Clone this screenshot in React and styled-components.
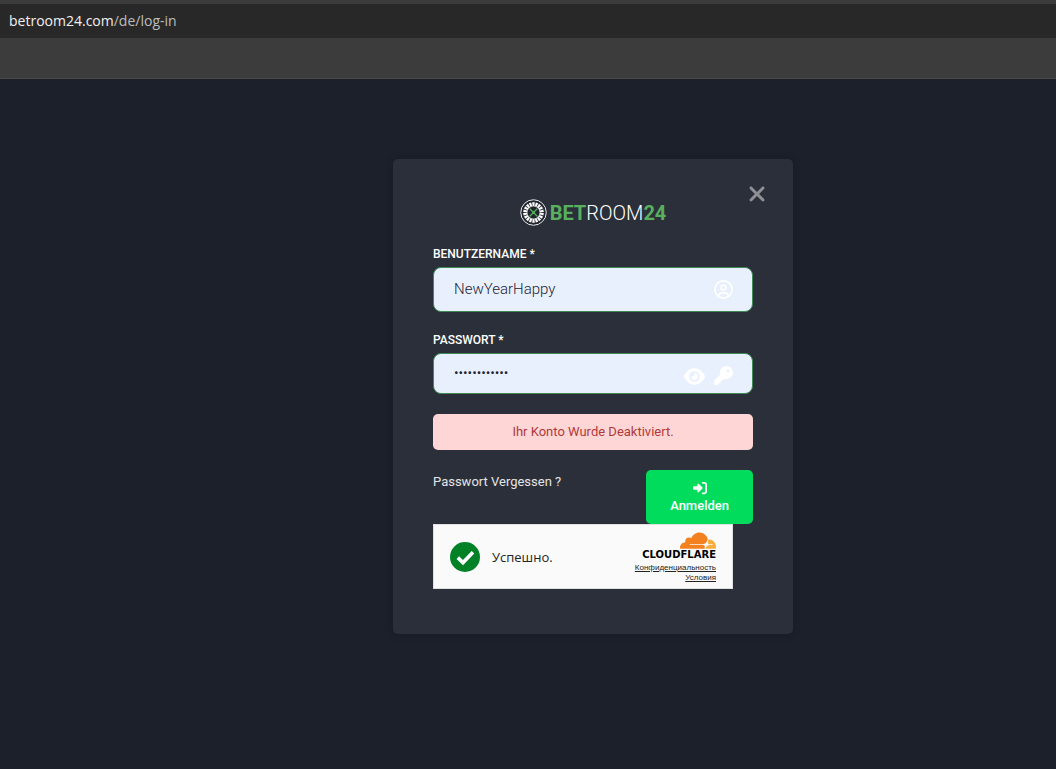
import { useState } from "react";
import styled, { createGlobalStyle } from "styled-components";
import {
  FaEye,
  FaKey,
  FaRegCircleUser,
  FaRightToBracket,
  FaXmark,
} from "react-icons/fa6";

const pockets = Array.from({ length: 18 }, (_, index) => index * 20);

export default function App() {
  const [username, setUsername] = useState("NewYearHappy");
  const [password, setPassword] = useState("happyyear123");
  const [showPassword, setShowPassword] = useState(false);

  return (
    <>
      <GlobalStyle />
      <BrowserBar>
        <AddressBar>
          <AddressHost>betroom24.com</AddressHost>/de/log-in
        </AddressBar>
      </BrowserBar>
      <Page>
        <LoginCard onSubmit={(event) => event.preventDefault()}>
          <CloseButton type="button" aria-label="Schließen">
            <FaXmark size={24} />
          </CloseButton>

          <Brand>
            <RouletteWheel />
            <BrandName>
              <BrandAccent>BET</BrandAccent>ROOM<BrandAccent>24</BrandAccent>
            </BrandName>
          </Brand>

          <Field>
            <Label htmlFor="username">BENUTZERNAME *</Label>
            <InputBox>
              <Input
                id="username"
                type="text"
                value={username}
                onChange={(event) => setUsername(event.target.value)}
              />
              <FieldIcon>
                <FaRegCircleUser size={19} />
              </FieldIcon>
            </InputBox>
          </Field>

          <Field>
            <Label htmlFor="password">PASSWORT *</Label>
            <InputBox $compact>
              <Input
                id="password"
                type={showPassword ? "text" : "password"}
                value={password}
                onChange={(event) => setPassword(event.target.value)}
              />
              <EyeButton
                type="button"
                aria-label="Passwort anzeigen"
                onClick={() => setShowPassword(!showPassword)}
              >
                <FaEye size={21} />
              </EyeButton>
              <FieldIcon>
                <FaKey size={19} />
              </FieldIcon>
            </InputBox>
          </Field>

          <Alert role="alert">Ihr Konto Wurde Deaktiviert.</Alert>

          <Actions>
            <ForgotLink href="#">Passwort Vergessen ?</ForgotLink>
            <SubmitButton type="submit">
              <FaRightToBracket size={14} />
              Anmelden
            </SubmitButton>
          </Actions>

          <Captcha>
            <CheckIcon />
            <CaptchaText>Успешно.</CaptchaText>
            <CaptchaBrand>
              <CloudIcon />
              <CaptchaName>CLOUDFLARE</CaptchaName>
              <CaptchaLink href="#">Конфиденциальность</CaptchaLink>
              <CaptchaLink href="#">Условия</CaptchaLink>
            </CaptchaBrand>
          </Captcha>
        </LoginCard>
      </Page>
    </>
  );
}

function RouletteWheel() {
  return (
    <svg width="27" height="27" viewBox="0 0 54 54" aria-hidden="true">
      <circle cx="27" cy="27" r="25.5" fill="#22262f" stroke="#e8eaec" strokeWidth="2" />
      {pockets.map((angle) => (
        <path
          key={angle}
          d="M24.4 6.5h5.2l-1 8.5h-3.2z"
          fill="#fff"
          transform={`rotate(${angle} 27 27)`}
        />
      ))}
      <circle cx="27" cy="27" r="13" fill="#20252d" stroke="#e8eaec" strokeWidth="1.5" />
      <path
        d="M20 20l14 14M34 20L20 34"
        stroke="#58b05f"
        strokeWidth="2.4"
        strokeLinecap="round"
      />
      <circle cx="27" cy="27" r="2.5" fill="#58b05f" />
    </svg>
  );
}

function CheckIcon() {
  return (
    <svg width="30" height="30" viewBox="0 0 30 30" aria-hidden="true">
      <circle cx="15" cy="15" r="15" fill="#038127" />
      <path d="M7.8 15.6l5.2 5L23 10.3" fill="none" stroke="#fff" strokeWidth="3.6" />
    </svg>
  );
}

function CloudIcon() {
  return (
    <svg width="36" height="17" viewBox="0 6.3 24 11.3" aria-hidden="true">
      <path
        fill="#f4811f"
        d="M16.5088 16.8447c.1475-.5068.0908-.9707-.1553-1.3154-.2246-.3164-.6045-.499-1.0615-.5205l-8.6592-.1123a.1559.1559 0 0 1-.1333-.0713c-.0283-.042-.0351-.0986-.021-.1553.0278-.084.1123-.1484.2036-.1562l8.7359-.1123c1.0351-.0489 2.1601-.8868 2.5537-1.9136l.499-1.3013c.0215-.0561.0293-.1128.0147-.168-.5625-2.5463-2.835-4.4453-5.5499-4.4453-2.5039 0-4.6284 1.6177-5.3876 3.8614-.4927-.3658-1.1187-.5625-1.794-.499-1.2026.119-2.1665 1.083-2.2861 2.2856-.0283.31-.0069.6128.0635.894C1.5683 13.171 0 14.7754 0 16.752c0 .1748.0142.3515.0352.5273.0141.083.0844.1475.1689.1475h15.9814c.0909 0 .1758-.0645.2032-.1553l.12-.4268z"
      />
      <path
        fill="#faad3f"
        d="M19.2656 11.2686c-.077 0-.1611 0-.2383.0112-.0566 0-.1054.0415-.127.0976l-.3378 1.1744c-.1475.5068-.0918.9707.1543 1.3164.2256.3164.6055.498 1.0625.5195l1.8437.1133c.0557 0 .1055.0263.1329.0703.0283.043.0351.1074.0214.1562-.0283.084-.1132.1485-.204.1553l-1.921.1123c-1.041.0488-2.1582.8867-2.5527 1.914l-.1406.3585c-.0283.0713.0215.1416.0986.1416h6.5977c.0771 0 .1474-.0489.169-.126.1122-.4082.1757-.837.1757-1.2803 0-2.6025-2.125-4.727-4.7344-4.727"
      />
    </svg>
  );
}

const GlobalStyle = createGlobalStyle`
  * {
    box-sizing: border-box;
  }

  body {
    margin: 0;
    background-color: #1c202b;
    font-family: Roboto, "Liberation Sans", sans-serif;
  }
`;

const BrowserBar = styled.header`
  background-color: #3c3c3c;
  border-bottom: 1px solid #474748;
  padding-top: 4px;
  padding-bottom: 40px;
`;

const AddressBar = styled.div`
  background-color: #282828;
  color: #bdbdbd;
  font-family: "Open Sans", "Noto Sans", sans-serif;
  font-size: 14px;
  line-height: 34px;
  padding-left: 9px;
`;

const AddressHost = styled.span`
  color: #f1f1f1;
`;

const Page = styled.main`
  display: flex;
  justify-content: center;
  padding: 80px 0 80px 130px;
`;

const LoginCard = styled.form`
  position: relative;
  width: 100%;
  max-width: 400px;
  padding: 40px 40px 45px;
  border-radius: 5px;
  background-color: #2b2f39;
  box-shadow: 0 0 8px rgba(0, 0, 0, 0.2);
`;

const CloseButton = styled.button`
  position: absolute;
  top: 23px;
  right: 24px;
  display: flex;
  padding: 0;
  border: none;
  background: none;
  color: #8f9094;
  cursor: pointer;
`;

const Brand = styled.div`
  display: flex;
  align-items: center;
  justify-content: center;
  gap: 3px;
  height: 27px;
  margin-bottom: 18px;
`;

const BrandName = styled.span`
  color: #fff;
  font-size: 20px;
  font-weight: 300;
`;

const BrandAccent = styled.span`
  color: #58b05f;
  font-weight: 700;
`;

const Field = styled.div`
  margin-bottom: 18px;
`;

const Label = styled.label`
  display: block;
  margin-bottom: 3px;
  color: #fff;
  font-size: 12px;
  font-weight: 500;
  line-height: 20px;
`;

const InputBox = styled.div`
  display: flex;
  align-items: flex-start;
  gap: 9px;
  height: ${({ $compact }) => ($compact ? "41px" : "45px")};
  padding: 0 19px 0 20px;
  border: 1px solid #3f8a52;
  border-radius: 8px;
  background-color: #e8f0fe;
`;

const Input = styled.input`
  flex: 1;
  align-self: stretch;
  min-width: 0;
  padding: 0 0 2px;
  border: none;
  outline: none;
  background: none;
  color: #1d2230;
  font-family: inherit;
  font-size: ${({ type }) => (type === "password" ? "14px" : "15px")};
  font-weight: 300;
`;

const FieldIcon = styled.span`
  display: flex;
  margin-top: 12px;
  color: #fff;
`;

const EyeButton = styled.button`
  display: flex;
  margin-top: 12px;
  padding: 0;
  border: none;
  background: none;
  color: #fff;
  cursor: pointer;
`;

const Alert = styled.p`
  margin: 20px 0;
  border-radius: 5px;
  background-color: #ffd6d6;
  color: #b03a3a;
  font-size: 13px;
  line-height: 36px;
  text-align: center;
`;

const Actions = styled.div`
  display: flex;
  align-items: flex-start;
  justify-content: space-between;
`;

const ForgotLink = styled.a`
  color: #e4e5e7;
  font-size: 13px;
  line-height: 24px;
  text-decoration: none;
`;

const SubmitButton = styled.button`
  display: flex;
  flex-direction: column;
  align-items: center;
  gap: 2px;
  padding: 11px 24px 10px;
  border: none;
  border-radius: 5px;
  background-color: #02dc5d;
  color: #fff;
  font-family: inherit;
  font-size: 13px;
  font-weight: 500;
  line-height: 17px;
  cursor: pointer;
`;

const Captcha = styled.div`
  display: flex;
  align-items: center;
  max-width: 300px;
  height: 65px;
  padding: 0 16px;
  border: 1px solid #e0e0e0;
  background-color: #fafafa;
`;

const CaptchaText = styled.span`
  margin-left: 12px;
  color: #232323;
  font-family: "Open Sans", "Noto Sans", sans-serif;
  font-size: 13px;
`;

const CaptchaBrand = styled.div`
  display: flex;
  flex-direction: column;
  align-items: flex-end;
  margin-left: auto;
  padding-top: 2px;
`;

const CaptchaName = styled.span`
  padding-bottom: 2px;
  color: #000;
  font-family: "DejaVu Sans", sans-serif;
  font-size: 10px;
  font-weight: 700;
  line-height: 12px;
`;

const CaptchaLink = styled.a`
  color: #232323;
  font-family: "Liberation Sans", sans-serif;
  font-size: 8px;
  line-height: 10px;
`;
